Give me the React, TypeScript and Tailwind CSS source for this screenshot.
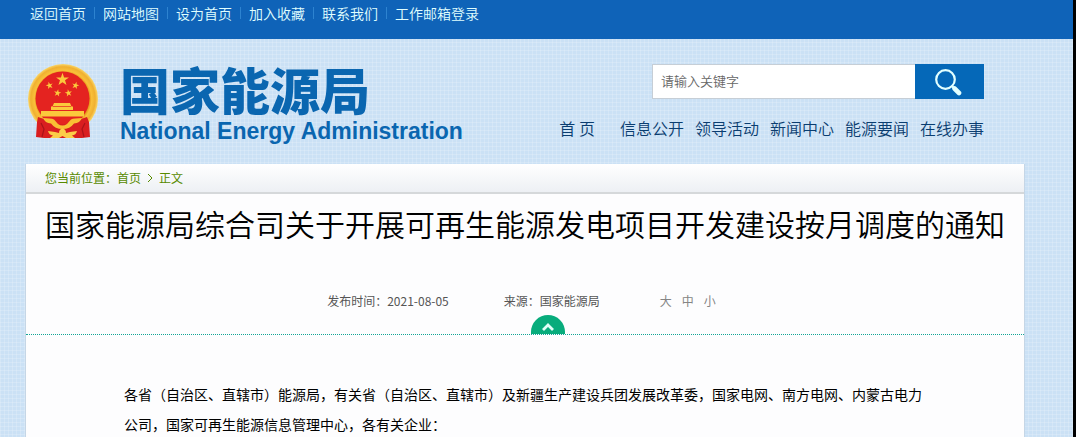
import React from 'react';

const topLinks = ['返回首页', '网站地图', '设为首页', '加入收藏', '联系我们', '工作邮箱登录'];
const navLinks = ['信息公开', '领导活动', '新闻中心', '能源要闻', '在线办事'];

const STAR = '0,-10 2.3,-3.1 9.5,-3.1 3.7,1.2 5.9,8.1 0,3.9 -5.9,8.1 -3.7,1.2 -9.5,-3.1 -2.3,-3.1';

function Emblem() {
  return (
    <svg viewBox="0 0 72 76" className="h-[76px] w-[72px] shrink-0" role="img" aria-label="国徽">
      <defs>
        <radialGradient id="ring" cx="50%" cy="50%" r="50%">
          <stop offset="74%" stopColor="#e08a12" />
          <stop offset="82%" stopColor="#f9c03a" />
          <stop offset="92%" stopColor="#f0b030" />
          <stop offset="100%" stopColor="#fbd768" />
        </radialGradient>
      </defs>
      <circle cx="36" cy="35" r="35" fill="url(#ring)" />
      <circle cx="35.5" cy="34.5" r="27" fill="#e42320" />
      <path d="M14 51h43l-6 8H20z" fill="#e42320" />
      <g fill="#fbc93c">
        <polygon points={STAR} transform="translate(35.5 15.5) scale(.68)" />
        <polygon points={STAR} transform="translate(22.5 21.5) rotate(-15) scale(.38)" />
        <polygon points={STAR} transform="translate(48.5 21.5) rotate(15) scale(.38)" />
        <polygon points={STAR} transform="translate(30.5 29) rotate(10) scale(.38)" />
        <polygon points={STAR} transform="translate(41.5 29) rotate(-10) scale(.38)" />
        <path d="M27 39h16l1.5 3.5H46V46H24v-3.5h1.5z" />
        <path d="M14 47h43v5.5H14z" />
      </g>
      <path d="M26 42.5h18M24 46.5h22" stroke="#e42320" strokeWidth=".7" />
      <path d="M11 53l9 3 8 4h15l8-4 9-3 2 5 1 15-8 1H17l-8-1 1-15z" fill="#d91e20" />
      <path d="M16 54q8 0 11 1.500l4 4.500q4.500 3 9 0l4-4.500q3-1.500 11-1.500-2 5-8 5.500-4 5.500-11.500 5.500T24 59.500q-6-.5-8-5.500z" fill="#f9bf34" />
      <path d="M21 67l7 1 4 1q0-4 3.500-4.500 3.500.5 3.500 4.500l4-1 7-1q-1 4-5 4.500l3 2.500h-9l-3.500-2-3.500 2h-9l3-2.500q-4-.5-5-4.500z" fill="#fbcd48" />
      <path d="M14 59l3 6-2 8M58 59l-3 6 2 8" fill="none" stroke="#a91319" strokeWidth="1.2" />
    </svg>
  );
}

export default function App() {
  return (
    <div className="flex min-h-screen flex-col overflow-x-hidden border-r-3 border-black bg-[#cbe1f5] bg-[repeating-linear-gradient(0deg,rgba(255,255,255,0.18)_0px,rgba(255,255,255,0.18)_1px,transparent_1px,transparent_4px),repeating-linear-gradient(90deg,rgba(255,255,255,0.18)_0px,rgba(255,255,255,0.18)_1px,transparent_1px,transparent_4px)] font-['Noto_Sans_CJK_SC',sans-serif]">
      <nav aria-label="快捷链接" className="h-[39px] bg-[#0f63b8] pl-[30px] pt-[3px]">
        <ul className="flex text-sm font-[350] leading-5 text-[#e0ffff]">
          {topLinks.map((t, i) => (
            <li key={t} className="flex items-center">
              {i > 0 && <span className="mx-2 h-3 w-px bg-[#2d83d0]" />}
              <a href="#">{t}</a>
            </li>
          ))}
        </ul>
      </nav>

      <header className="flex h-[125px] items-start justify-between pl-[27px] pr-[89px]">
        <a href="#" className="flex items-start pt-[25px] text-[#0a66b0]">
          <Emblem />
          <span className="flex flex-col gap-1.5 pl-[21px]">
            <span className="text-[50px] font-black leading-[48px]">国家能源局</span>
            <span className="font-['Liberation_Sans',sans-serif] text-[23px] font-bold leading-[26px]">National Energy Administration</span>
          </span>
        </a>
        <div className="flex flex-col items-end pt-[25px]">
          <form className="flex h-[35px]" onSubmit={(e) => e.preventDefault()}>
            <input
              type="text"
              aria-label="搜索关键字"
              placeholder="请输入关键字"
              className="w-[263px] border border-r-0 border-[#c6ced6] bg-white px-2 pb-0.5 text-[13px] font-[350] text-[#555] outline-none placeholder:text-[#666]"
            />
            <button type="submit" aria-label="搜索" className="flex w-[69px] items-center justify-center bg-[#0568b8] pr-1">
              <svg viewBox="0 0 28 28" className="h-7 w-7" fill="none" stroke="#e2ffff" strokeLinecap="round">
                <circle cx="11.5" cy="11.5" r="9.3" strokeWidth="2.2" />
                <path d="M18.2 18.2l2 2" strokeWidth="2.2" />
                <path d="M20.5 20.5l4.500 4.500" strokeWidth="4.6" />
              </svg>
            </button>
          </form>
          <nav aria-label="主导航" className="flex gap-[11px] pt-[17px] text-base font-[350] leading-6 text-[#0a3d70]">
            <a href="#" className="mr-[14px]">首 页</a>
            {navLinks.map((t) => (
              <a key={t} href="#">{t}</a>
            ))}
          </nav>
        </div>
      </header>

      <main className="ml-[25px] mr-12 flex-1 border-x border-[#c5d6e6] bg-[#fdfdfe]">
        <nav aria-label="面包屑" className="flex h-[30px] items-center gap-1.5 border-b-2 border-[#d5d8da] bg-linear-to-b from-white to-[#edf0f4] pl-[19px] text-xs text-[#578a00]">
          <span>您当前位置：<a href="#">首页</a></span>
          <svg viewBox="0 0 6 10" className="h-2.5 w-1.5" fill="none" stroke="currentColor" aria-hidden="true">
            <path d="M1 1l4 4-4 4" />
          </svg>
          <span>正文</span>
        </nav>
        <article>
          <header className="border-b border-dotted border-[#12a596]">
            <h1 className="pt-1.5 text-center text-[30px] font-[350] leading-[46px] text-black">国家能源局综合司关于开展可再生能源发电项目开发建设按月调度的通知</h1>
            <div className="flex justify-center pr-[7px] pt-[45px] text-xs leading-5 text-[#555]">
              <span>发布时间：<time dateTime="2021-08-05">2021-08-05</time></span>
              <span className="ml-[55px]">来源：国家能源局</span>
              <span className="ml-[60px] flex gap-2.5 text-[#858585]">
                <button type="button">大</button>
                <button type="button">中</button>
                <button type="button">小</button>
              </span>
            </div>
            <div className="flex justify-center pl-[46px] pt-1">
              <button type="button" aria-label="收起" className="flex h-[19px] w-[34px] items-center justify-center rounded-t-full bg-[#08ac7c] pt-1">
                <svg viewBox="0 0 12 8" className="h-2 w-3" fill="none" stroke="#e0fff8" strokeWidth="2.8">
                  <path d="M1 7l5-5 5 5" />
                </svg>
              </button>
            </div>
          </header>
          <p className="pl-[98px] pr-[100px] pt-11 text-sm leading-[30px] text-black">
            各省（自治区、直辖市）能源局，有关省（自治区、直辖市）及新疆生产建设兵团发展改革委，国家电网、南方电网、内蒙古电力公司，国家可再生能源信息管理中心，各有关企业：
          </p>
        </article>
      </main>
    </div>
  );
}
